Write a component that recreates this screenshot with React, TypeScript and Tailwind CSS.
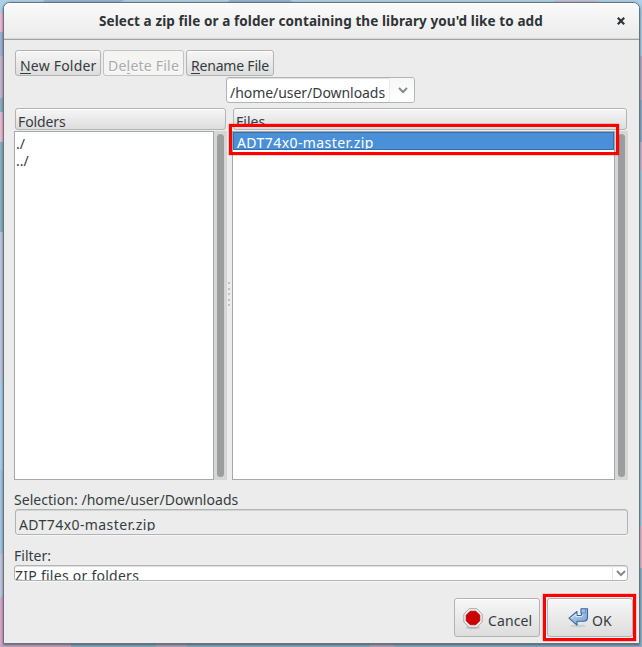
import type { ReactNode } from 'react';

const raised = 'border border-[#b0b4b4] rounded-[3px] bg-gradient-to-b from-[#f7f7f7] to-[#dddddd] shadow-[inset_0_1px_0_#fff]';

function Desktop() {
  return (
    <svg className="absolute inset-0" width="642" height="647" viewBox="0 0 642 647">
      <rect width="642" height="647" fill="#acd0ea" />
      <path d="M45 0h80l-12 5H38zM230 0h60l6 4h-72z" fill="#8fb4d6" />
      <path d="M555 0h45l-8 5h-42z" fill="#c0bdd8" />
      <path d="M0 13l4 2v16l-4 1z" fill="#f0b9d4" />
      <path d="M0 32h4v24H0z" fill="#9fb4d3" />
      <path d="M0 56h4v42H0z" fill="#c9b5d2" />
      <path d="M0 98h4v14H0zM0 142h4v90H0z" fill="#8eafc3" />
      <path d="M0 112l4 2v27H0z" fill="#f0b9d4" />
      <path d="M0 232h4v150H0z" fill="#bcc8e2" />
      <path d="M0 470h4v84H0z" fill="#a7c5e1" />
      <path d="M0 554h4v40H0z" fill="#c4c7df" />
      <path d="M0 598l4-4v53H0z" fill="#dfa6c9" />
      <path d="M639 56h3v44h-3z" fill="#bbb0d0" />
      <path d="M639 100h3v42h-3z" fill="#91aed3" />
      <path d="M639 142h3v28h-3z" fill="#ccb9d7" />
      <path d="M639 170h3v110h-3z" fill="#a8cce5" />
      <path d="M639 280h3v120h-3z" fill="#b9c4df" />
      <path d="M639 526h3v42h-3z" fill="#e6bbd4" />
      <path d="M639 568h3v79h-3z" fill="#93b9d2" />
      <path d="M0 644h71v3H0z" fill="#c5a9c6" />
      <path d="M71 644h571v3H71z" fill="#8baec6" />
      <path d="M157 644h30v3h-32zM370 644h22l4 3h-26z" fill="#b3a9c5" />
    </svg>
  );
}

function Chevron({ className = '' }: { className?: string }) {
  return (
    <svg className={className} width="10" height="7" viewBox="0 0 10 7">
      <path d="M1 1l4 4 4-4" fill="none" stroke="#878b8b" strokeWidth="2" />
    </svg>
  );
}

function ToolButton({ children, className }: { children: ReactNode; className: string }) {
  return <button className={`h-[26px] pt-[5px] text-left leading-[20px] ${className}`}>{children}</button>;
}

function U({ children }: { children: ReactNode }) {
  return <span className="border-b border-current inline-block h-[18px]">{children}</span>;
}

function Scrollbar() {
  return (
    <div className="w-[13px] h-[349px] bg-[#d6d6d6] px-[3px] pt-[3px] pb-[3px]">
      <div className="h-full w-[7px] rounded-full bg-[#9b9d9e]" />
    </div>
  );
}

export default function App() {
  return (
    <div className="relative w-[642px] h-[647px] overflow-hidden font-['Noto_Sans',sans-serif] text-[14px] text-[#363c3e] whitespace-nowrap">
      <Desktop />
      <div className="relative ml-[3px] mt-[2px] w-[637px] h-[642px] border border-[#66747c] rounded-t-[7px] bg-[#ececec] shadow-[0_1px_3px_rgba(0,0,0,0.5)]">
        <header className="h-[37px] flex items-center rounded-t-[6px] border-b border-[#9fa3a1] bg-gradient-to-b from-[#fafafa] to-[#ebebeb] shadow-[inset_0_1px_0_#fff,inset_0_-1px_0_#d5d8d2]">
          <h1 className="ml-[95px] w-[446px] font-bold text-[13.5px] leading-[20px] tracking-[0.1px] text-[#2e3436]">Select a zip file or a folder containing the library you'd like to add</h1>
          <svg className="ml-[72px]" width="8" height="8" viewBox="0 0 8 8">
            <path d="M.8.8l6.4 6.4M7.2.8L.8 7.2" stroke="#2e3436" strokeWidth="2.2" />
          </svg>
        </header>

        <div className="flex mt-[10px] ml-[11px]">
          <ToolButton className={`w-[86px] pl-[4px] tracking-[0.2px] ${raised}`}><U>N</U>ew Folder</ToolButton>
          <ToolButton className="w-[81px] ml-[2px] pl-[4px] tracking-[0.22px] border border-[#c0c3c3] rounded-[3px] bg-[#f4f4f3] text-[#a9abaa] [text-shadow:0_1px_#fff]">De<U>l</U>ete File</ToolButton>
          <ToolButton className={`w-[88px] ml-[2px] pl-[4px] tracking-[-0.2px] ${raised}`}><U>R</U>ename File</ToolButton>
        </div>

        <div className="ml-[222px] mt-px w-[189px] h-[26px] flex border border-[#b0b4b4] rounded-[3px] bg-white overflow-hidden shadow-[inset_0_1px_1px_#dcdcdc]">
          <span className="w-[162px] pl-[3px] pt-[5px] leading-[20px] tracking-[-0.05px]">/home/user/Downloads</span>
          <span className="flex-1 border-l border-[#eeeeee] bg-gradient-to-b from-[#f7f7f7] to-white pt-[9px] pl-[8px]"><Chevron /></span>
        </div>

        <div className="flex mt-[5px] ml-[11px]">
          <div className={`w-[211px] h-[22px] pl-[2px] pt-[3px] leading-[20px] tracking-[-0.1px] overflow-hidden ${raised}`}>Fol<U>d</U>ers</div>
          <div className={`ml-[7px] w-[394px] h-[22px] pl-[2px] pt-[3px] leading-[20px] overflow-hidden ${raised}`}><U>F</U>iles</div>
        </div>

        <div className="flex mt-px ml-[10px]">
          <div className="w-[200px] h-[349px] border border-[#a6a9a9] bg-white pl-px pt-[3px] leading-[17px]">
            <div>./</div>
            <div>../</div>
          </div>
          <Scrollbar />
          <div className="w-[5px] pt-[151px] flex flex-col gap-[3.5px]">
            <i className="block w-[2px] h-[2px] ml-px bg-[#c2c2c2]" />
            <i className="block w-[2px] h-[2px] ml-px bg-[#c2c2c2]" />
            <i className="block w-[2px] h-[2px] ml-px bg-[#c2c2c2]" />
            <i className="block w-[2px] h-[2px] ml-px bg-[#c2c2c2]" />
            <i className="block w-[2px] h-[2px] ml-px bg-[#c2c2c2]" />
          </div>
          <div className="w-[383px] h-[349px] border border-[#a6a9a9] bg-white">
            <div className="h-[18px] border border-[#3a6ea8] bg-[#4a90d9] text-white pl-[3px] overflow-hidden leading-[20px] tracking-[0.42px]">ADT74x0-master.zip</div>
          </div>
          <Scrollbar />
        </div>

        <div className="ml-[10px] mt-[10px] h-[19px] leading-[20px] tracking-[0.04px]">Selection: /home/user/Downloads</div>
        <div className="ml-[11px] w-[613px] h-[26px] border border-[#b0b4b4] rounded-[3px] pl-[3px] pt-[5px] shadow-[inset_0_1px_0_#d2d3d3,0_1px_0_#f6f6f6]">
          <div className="h-[16px] overflow-hidden leading-[20px] tracking-[0.42px]">ADT74x0-master.zip</div>
        </div>
        <div className="ml-[10px] mt-[11px] h-[19px] leading-[20px]">Filter:</div>
        <div className="ml-[10px] w-[614px] h-[16px] flex border border-[#b0b4b4] rounded-[3px] bg-white overflow-hidden shadow-[inset_0_1px_1px_#dcdcdc,0_1px_0_#f6f6f6]">
          <span className="w-[597px] leading-[20px] tracking-[0.26px]">ZIP files or folders</span>
          <span className="flex-1 border-l border-[#e8e8e8] pt-[4px] pl-[3px]"><Chevron /></span>
        </div>

        <footer className="flex ml-[450px] mt-[17px]">
          <button className={`w-[86px] h-[39px] flex ${raised}`}>
            <svg className="ml-[8px] mt-[9px]" width="20" height="22" viewBox="0 0 20 22">
              <ellipse cx="10" cy="19.5" rx="7" ry="1.7" fill="#c5c5c5" />
              <path d="M6.2.7h7.6l5.4 5.4v7.8l-5.4 5.4H6.2L.8 13.9V6.1z" fill="#f3f4f2" stroke="#a5a8a3" />
              <path d="M7.2 3.2h5.6l4 4v5.6l-4 4H7.2l-4-4V7.2z" fill="#cc0000" stroke="#b00000" strokeWidth=".8" />
            </svg>
            <span className="ml-[5px] mt-[12px] leading-[20px] tracking-[0.1px]">Cancel</span>
          </button>
          <button className={`ml-[7px] w-[86px] h-[39px] flex ${raised}`}>
            <svg className="ml-[20px] mt-[9px]" width="21" height="20" viewBox="0 0 21 20">
              <defs>
                <linearGradient id="arrow" x1="0" y1="0" x2="1" y2="1">
                  <stop offset="0" stopColor="#c6d8ec" />
                  <stop offset="1" stopColor="#729fcf" />
                </linearGradient>
              </defs>
              <ellipse cx="10" cy="18" rx="8" ry="1.5" fill="#cfcfcf" />
              <path d="M13 .7h6.5v8.5q0 4-4 4H9v4L1 10.2l8-6.7v4h3.5q1 0 1-1V5H13z" fill="url(#arrow)" stroke="#3465a4" strokeWidth="1.1" strokeLinejoin="round" />
              <path d="M13.5 5h4v-4" fill="none" stroke="#5c86bb" strokeWidth=".8" />
              <path d="M3 10.2l5-4.2v2.6h5.6q1-.4 1.2-2" fill="none" stroke="#e5eef7" />
            </svg>
            <span className="ml-[3px] mt-[12px] leading-[20px]">OK</span>
          </button>
        </footer>
      </div>

      <div className="absolute left-[229px] top-[124px] w-[390px] h-[31px] border-[3px] border-[#ff0000] shadow-[0_0_1px_#ff0000]" />
      <div className="absolute left-[543px] top-[594px] w-[93px] h-[47px] border-[3px] border-[#ff0000] shadow-[0_0_1px_#ff0000]" />
    </div>
  );
}
